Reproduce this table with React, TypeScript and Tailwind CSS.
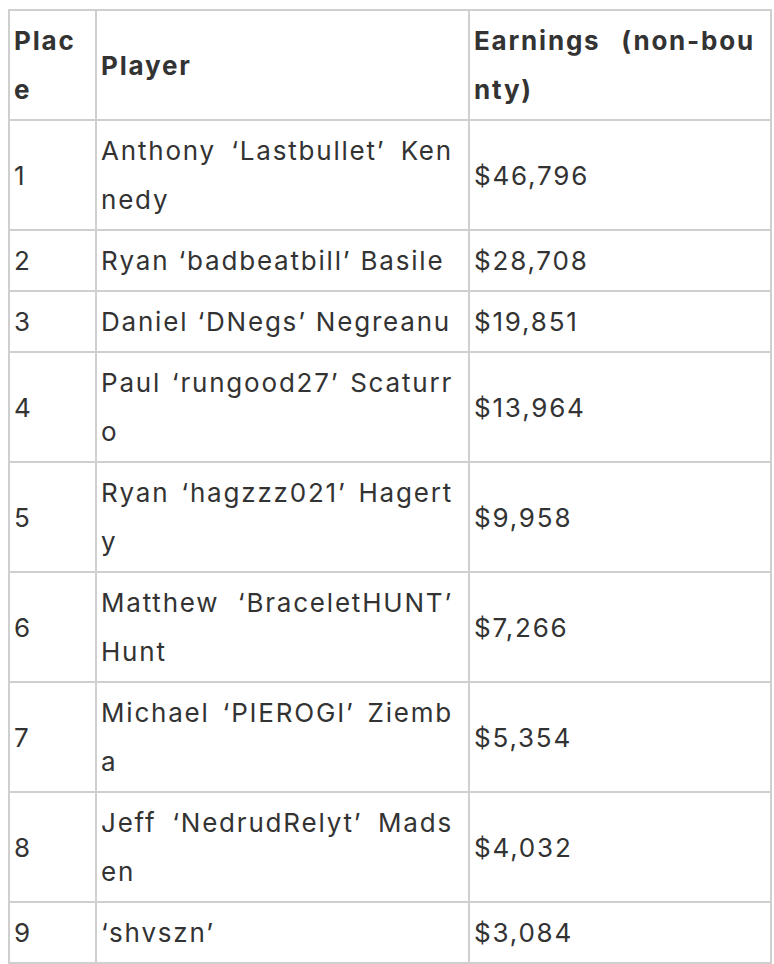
const rows = [
  { place: "1", player: "Anthony ‘Lastbullet’ Kennedy", earnings: "$46,796" },
  { place: "2", player: "Ryan ‘badbeatbill’ Basile", earnings: "$28,708" },
  { place: "3", player: "Daniel ‘DNegs’ Negreanu", earnings: "$19,851" },
  { place: "4", player: "Paul ‘rungood27’ Scaturro", earnings: "$13,964" },
  { place: "5", player: "Ryan ‘hagzzz021’ Hagerty", earnings: "$9,958" },
  { place: "6", player: "Matthew ‘BraceletHUNT’ Hunt", earnings: "$7,266" },
  { place: "7", player: "Michael ‘PIEROGI’ Ziemba", earnings: "$5,354" },
  { place: "8", player: "Jeff ‘NedrudRelyt’ Madsen", earnings: "$4,032" },
  { place: "9", player: "‘shvszn’", earnings: "$3,084" },
];

const cell =
  "border-2 border-[#cfcfcf] pl-[4px] pr-[15px] py-[5px] align-middle text-justify break-all";

export default function App() {
  return (
    <div className="bg-white min-h-screen pt-[9px] pl-[8px]">
      <table
        className="table-fixed border-collapse w-[762px] text-[#333] text-[26px] leading-[49px] tracking-[1.8px]"
        style={{ fontFamily: "Inter, 'Noto Sans', sans-serif" }}
      >
        <colgroup>
          <col className="w-[87px]" />
          <col className="w-[373px]" />
          <col className="w-[302px]" />
        </colgroup>
        <thead>
          <tr className="text-left font-bold">
            <th className={cell}>Place</th>
            <th className={cell}>Player</th>
            <th className={cell}>Earnings (non-bounty)</th>
          </tr>
        </thead>
        <tbody>
          {rows.map((r) => (
            <tr key={r.place}>
              <td className={cell}>{r.place}</td>
              <td className={cell}>{r.player}</td>
              <td className={cell}>{r.earnings}</td>
            </tr>
          ))}
        </tbody>
      </table>
    </div>
  );
}
